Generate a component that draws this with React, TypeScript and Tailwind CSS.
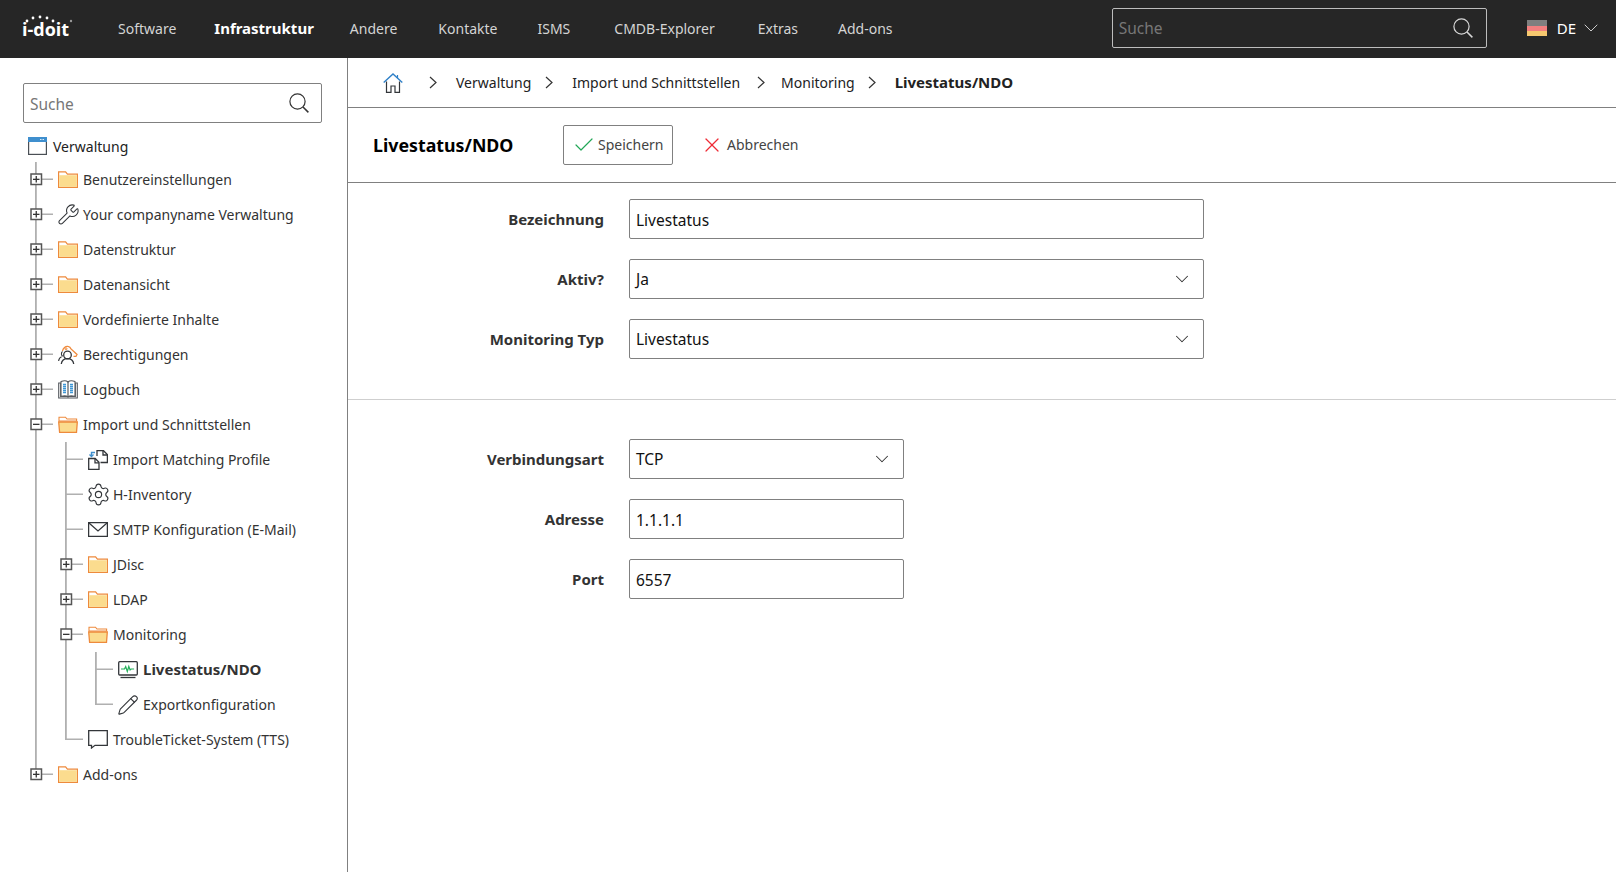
import { Check, ChevronDown, Pencil, Settings, Wrench, X } from "lucide-react";
import type { ReactNode } from "react";

const NAV = [
  { label: "Software", cls: "" },
  { label: "Infrastruktur", cls: "ml-[38px] text-[15px] font-bold text-white" },
  { label: "Andere", cls: "ml-[36px]" },
  { label: "Kontakte", cls: "ml-[41px]" },
  { label: "ISMS", cls: "ml-[40px]" },
  { label: "CMDB-Explorer", cls: "ml-[44px]" },
  { label: "Extras", cls: "ml-[43px]" },
  { label: "Add-ons", cls: "ml-[40px]" },
];

function SearchIcon({ color }: { color: string }) {
  return (
    <svg width="20" height="20" viewBox="0 0 20 20" fill="none" stroke={color} strokeWidth="1.2">
      <circle cx="8.5" cy="8.5" r="7.6" />
      <path d="M14 14l5.4 5.4" strokeWidth="1.5" />
    </svg>
  );
}

function Logo() {
  return (
    <svg width="52" height="30" viewBox="0 0 52 30" className="ml-[22px] shrink-0">
      {[[5, 7], [11, 4], [18, 3], [25, 4], [31, 7]].map(([x, y]) => (
        <circle key={x} cx={x} cy={y} r="1.4" fill="#fff" />
      ))}
      <circle cx="49" cy="7" r="1.2" fill="#999" />
      <text x="0" y="22" fill="#fff" fontSize="18" fontWeight="700" fontFamily="'Open Sans', sans-serif">
        i-doit
      </text>
    </svg>
  );
}

function Folder({ open }: { open?: boolean }) {
  if (open) {
    return (
      <svg width="20" height="17" viewBox="0 0 20 17">
        <path d="M1 4V1.2h6.5L9 3h9.6v2H1z" fill="#fff" stroke="#ee8a3c" strokeWidth="1.1" />
        <path d="M.7 6h18.6l-.8 10.3H1.6z" fill="#fbdc8e" stroke="#ee8a3c" strokeWidth="1.3" />
      </svg>
    );
  }
  return (
    <svg width="20" height="17" viewBox="0 0 20 17">
      <path d="M.6 16.4V.8h7l1.8 2.4h10v13.2z" fill="#fff" stroke="#ee8a3c" strokeWidth="1.2" />
      <path d="M1.2 4.2h17.6v11.6H1.2z" fill="#fbdc8e" />
    </svg>
  );
}

function WindowIcon() {
  return (
    <svg width="19" height="18" viewBox="0 0 19 18">
      <rect x=".6" y=".6" width="17.8" height="16.8" fill="#fff" stroke="#4a4f55" strokeWidth="1.2" />
      <rect x="0" y="0" width="19" height="5" fill="#3f8fce" />
      <path d="M12 2.5h1.5M14.5 2.5H16" stroke="#d8ecfa" strokeWidth="1" />
    </svg>
  );
}

function PermissionsIcon() {
  return (
    <svg width="20" height="20" viewBox="0 0 20 20" fill="none">
      <path d="M4.500 6c.5-3 3-5 5.500-4.600 1.500.2 2.600 1.300 3 2.600l6 5.500-1 1.800h-2.500" stroke="#ef8a3c" strokeWidth="1.300" />
      <circle cx="8" cy="3.800" r="1" stroke="#ef8a3c" />
      <circle cx="9.500" cy="10" r="3.800" fill="#fff" stroke="#33363a" strokeWidth="1.300" />
      <path d="M3.300 19c.5-3.800 2.800-5.300 6.200-5.300s5.700 1.500 6.200 5.300" stroke="#33363a" strokeWidth="1.300" />
      <path d="M.6 16c.3-2.200 1.300-3.600 3-4.200M4.500 6.500C3 7.500 3 10.500 4.800 11.200" stroke="#33363a" strokeWidth="1.100" />
    </svg>
  );
}

function BookIcon() {
  return (
    <svg width="20" height="19" viewBox="0 0 20 19" fill="none">
      <path d="M.7 3h2v13.500h14.600V3h2v15H.7z" fill="#fff" stroke="#55595e" strokeWidth="1.100" />
      <path d="M3 1.500c2.500-1 5.500-1 7 .5 1.500-1.500 4.500-1.500 7-.5v15c-2.500-1-5.500-1-7 .5-1.500-1.500-4.500-1.500-7-.5z" fill="#fff" stroke="#55595e" strokeWidth="1.100" />
      <path d="M10 2v15" stroke="#55595e" strokeWidth="1.200" />
      <path d="M5 4.500h3M5 6.500h3M5 8.500h3M5 10.500h3M5 12.500h3M12 4.500h3M12 6.500h3M12 8.500h3M12 10.500h3M12 12.500h3" stroke="#3f97d6" strokeWidth="1.300" />
    </svg>
  );
}

function ImportIcon() {
  return (
    <svg width="20" height="20" viewBox="0 0 20 20" fill="none" stroke="#33363a" strokeWidth="1.300">
      <path d="M9 6V.7h6.500L19.400 4.500v8H12.500" />
      <path d="M15 1v4h4.400" />
      <path d="M.7 8.500h6.500l3.800 3.800v7.100H.7z" fill="#fff" />
      <path d="M7 8.800v4h4" />
      <path d="M7 2.500H3.500v3" stroke="#3f8fce" strokeWidth="1.400" />
      <path d="M1.500 4.500l2 2 2-2" stroke="#3f8fce" strokeWidth="1.400" />
    </svg>
  );
}

function MailIcon() {
  return (
    <svg width="20" height="15" viewBox="0 0 20 15" fill="none" stroke="#33363a" strokeWidth="1.300">
      <rect x=".6" y=".6" width="18.800" height="13.800" />
      <path d="M1 1l9 8 9-8" />
    </svg>
  );
}

function MonitorIcon() {
  return (
    <svg width="20" height="18" viewBox="0 0 20 18" fill="none">
      <rect x=".7" y=".7" width="18.600" height="13.300" rx="1" stroke="#33363a" strokeWidth="1.300" />
      <path d="M3 8h3.500l1.200-2.500 1.600 5 1.500-5 1.300 3.500 1-1h3" stroke="#22b05a" strokeWidth="1.200" />
      <path d="M2.500 16.500h15" stroke="#33363a" strokeWidth="1.300" />
    </svg>
  );
}

function ChatIcon() {
  return (
    <svg width="20" height="19" viewBox="0 0 20 19" fill="none" stroke="#33363a" strokeWidth="1.300">
      <path d="M.7.7h18.600v14.600H7L3.500 18v-2.700H.7z" />
    </svg>
  );
}

function HomeIcon() {
  return (
    <svg width="20" height="20" viewBox="0 0 20 20" fill="none">
      <path d="M.7 9.500L10 1l9.300 8.500" stroke="#2f80c8" strokeWidth="1.400" />
      <path d="M3.500 8.500v10.800h4.500v-6.300h4v6.300h4.500V8.500" stroke="#33363a" strokeWidth="1.200" />
      <path d="M14.500 2v3" stroke="#2f80c8" strokeWidth="1.200" />
    </svg>
  );
}

function CrumbChevron({ className }: { className: string }) {
  return (
    <svg width="8" height="13" viewBox="0 0 8 13" fill="none" stroke="#333" strokeWidth="1.200" className={className}>
      <path d="M1 1l6 5.500-6 5.500" />
    </svg>
  );
}

type Row = {
  label: string;
  depth: number;
  icon: ReactNode;
  expander?: "plus" | "minus";
  last?: boolean;
  bold?: boolean;
};

const ROWS: Row[] = [
  { label: "Benutzereinstellungen", depth: 0, icon: <Folder />, expander: "plus" },
  { label: "Your companyname Verwaltung", depth: 0, icon: <Wrench size={23} strokeWidth={1.1} color="#33363a" className="shrink-0" />, expander: "plus" },
  { label: "Datenstruktur", depth: 0, icon: <Folder />, expander: "plus" },
  { label: "Datenansicht", depth: 0, icon: <Folder />, expander: "plus" },
  { label: "Vordefinierte Inhalte", depth: 0, icon: <Folder />, expander: "plus" },
  { label: "Berechtigungen", depth: 0, icon: <PermissionsIcon />, expander: "plus" },
  { label: "Logbuch", depth: 0, icon: <BookIcon />, expander: "plus" },
  { label: "Import und Schnittstellen", depth: 0, icon: <Folder open />, expander: "minus" },
  { label: "Import Matching Profile", depth: 1, icon: <ImportIcon /> },
  { label: "H-Inventory", depth: 1, icon: <Settings size={25} strokeWidth={1.1} color="#33363a" className="shrink-0" /> },
  { label: "SMTP Konfiguration (E-Mail)", depth: 1, icon: <MailIcon /> },
  { label: "JDisc", depth: 1, icon: <Folder />, expander: "plus" },
  { label: "LDAP", depth: 1, icon: <Folder />, expander: "plus" },
  { label: "Monitoring", depth: 1, icon: <Folder open />, expander: "minus" },
  { label: "Livestatus/NDO", depth: 2, icon: <MonitorIcon />, bold: true },
  { label: "Exportkonfiguration", depth: 2, icon: <Pencil size={22} strokeWidth={1.2} color="#33363a" className="shrink-0" />, last: true },
  { label: "TroubleTicket-System (TTS)", depth: 1, icon: <ChatIcon />, last: true },
  { label: "Add-ons", depth: 0, icon: <Folder />, expander: "plus", last: true },
];

// connector lines and +/- box in front of a tree row
function Guide({ row }: { row: Row }) {
  const x = 36 + row.depth * 30;
  const parents = Array.from({ length: row.depth }, (_, i) => 36 + i * 30);
  return (
    <svg width={x + 22} height="35" className="shrink-0">
      {parents.map((p) => (
        <rect key={p} x={p - 1} y="0" width="1.800" height="35" fill="#b0b0b0" />
      ))}
      <rect x={x - 1} y="0" width="1.800" height={row.last ? 18 : 35} fill="#b0b0b0" />
      <rect x={x - 1} y="16.500" width="18" height="1.500" fill="#b0b0b0" />
      {row.expander && (
        <g>
          <rect x={x - 5} y="12" width="10.500" height="10.500" fill="#fff" stroke="#555" strokeWidth="1.500" />
          <rect x={x - 3} y="16.700" width="6.500" height="1.300" fill="#333" />
          {row.expander === "plus" && <rect x={x - 0.4} y="14" width="1.300" height="6.500" fill="#333" />}
        </g>
      )}
    </svg>
  );
}

function TreeRow({ row }: { row: Row }) {
  return (
    <div className="flex h-[35px] items-center">
      <Guide row={row} />
      <span className="flex w-5 shrink-0 justify-center">{row.icon}</span>
      <span className={`ml-[5px] whitespace-nowrap text-[#333] ${row.bold ? "text-[15px] font-bold" : ""}`}>{row.label}</span>
    </div>
  );
}

function Sidebar() {
  return (
    <aside className="w-[348px] shrink-0 border-r border-[#808080] pt-[25px]">
      <div className="ml-[23px] flex h-10 w-[299px] items-center justify-between rounded-[2px] border border-[#808080] pl-[6px] pr-[12px]">
        <input placeholder="Suche" className="w-40 pt-[3px] text-[15.5px] outline-none placeholder:text-[#777]" />
        <SearchIcon color="#333" />
      </div>
      <div className="mt-[7px] flex h-8 items-center pl-[28px]">
        <WindowIcon />
        <span className="ml-[6px] text-[#222]">Verwaltung</span>
      </div>
      <div>
        {ROWS.map((row) => (
          <TreeRow key={row.label} row={row} />
        ))}
      </div>
    </aside>
  );
}

function Field({ label, children }: { label: string; children: ReactNode }) {
  return (
    <div className="grid grid-cols-[256px_1fr] items-center gap-x-[25px]">
      <label className="text-right text-[15px] font-bold text-[#333]">{label}</label>
      {children}
    </div>
  );
}

function TextInput({ value, wide }: { value: string; wide?: boolean }) {
  return (
    <input
      readOnly
      value={value}
      className={`h-10 rounded-[2px] border border-[#808080] px-[6px] pt-px text-[15.5px] text-[#111] outline-none ${wide ? "w-[575px]" : "w-[275px]"}`}
    />
  );
}

function SelectInput({ value, wide }: { value: string; wide?: boolean }) {
  return (
    <div
      className={`flex h-10 items-center justify-between rounded-[2px] border border-[#808080] pl-[6px] pr-[10px] text-[15.5px] text-[#111] ${wide ? "w-[575px]" : "w-[275px]"}`}
    >
      <span className="pt-[2px]">{value}</span>
      <ChevronDown size={22} strokeWidth={1.1} color="#333" />
    </div>
  );
}

export default function App() {
  return (
    <div className="flex h-screen flex-col overflow-hidden bg-white font-['Noto_Sans',sans-serif] text-[14px]">
      <header className="flex h-[58px] shrink-0 items-center bg-[#262626]">
        <Logo />
        <nav className="mb-[2px] ml-[44px] flex items-center text-[14px] text-[#d4d4d4]">
          {NAV.map((item) => (
            <span key={item.label} className={item.cls}>
              {item.label}
            </span>
          ))}
        </nav>
        <div className="mb-[2px] ml-auto flex h-10 w-[375px] items-center justify-between rounded-[2px] border border-[#bdbdbd] pl-[6px] pr-[13px]">
          <input placeholder="Suche" className="w-40 bg-transparent pt-[2px] text-[15.5px] outline-none placeholder:text-[#777]" />
          <SearchIcon color="#d8d8d8" />
        </div>
        <div className="mb-[2px] ml-10 mr-[13px] flex items-center text-[15px] text-white">
          <div className="flex h-4 w-5 flex-col">
            <span className="h-[6px] bg-[#7f7f7f]" />
            <span className="h-[5px] bg-[#f27f7f]" />
            <span className="h-[5px] bg-[#f6c86f]" />
          </div>
          <span className="ml-[10px]">DE</span>
          <ChevronDown size={24} strokeWidth={1} color="#ccc" className="ml-[3px]" />
        </div>
      </header>

      <div className="flex min-h-0 flex-1">
        <Sidebar />
        <main className="min-w-0 flex-1">
          <div className="flex h-[50px] items-center border-b border-[#808080] pl-[35px] text-[#222]">
            <HomeIcon />
            <CrumbChevron className="ml-[26px]" />
            <span className="ml-[19px]">Verwaltung</span>
            <CrumbChevron className="ml-[14px]" />
            <span className="ml-[19px]">Import und Schnittstellen</span>
            <CrumbChevron className="ml-[17px]" />
            <span className="ml-[16px]">Monitoring</span>
            <CrumbChevron className="ml-[13px]" />
            <span className="ml-[19px] text-[15px] font-bold">Livestatus/NDO</span>
          </div>

          <div className="flex h-[75px] items-center border-b border-[#808080] pl-[25px]">
            <h1 className="mt-px w-[190px] text-[17.8px] font-bold text-black">Livestatus/NDO</h1>
            <button className="flex h-10 w-[110px] items-center rounded-[2px] border border-[#808080] pl-[8px] text-[#444]">
              <Check size={24} strokeWidth={1.2} color="#22a757" />
              <span className="mb-px ml-[2px]">Speichern</span>
            </button>
            <button className="ml-[27px] flex items-center text-[#444]">
              <X size={24} strokeWidth={1.2} color="#ee2b36" />
              <span className="mb-px ml-[3px]">Abbrechen</span>
            </button>
          </div>

          <div className="flex flex-col gap-5 border-b border-[#cfcfcf] pb-10 pt-4">
            <Field label="Bezeichnung">
              <TextInput value="Livestatus" wide />
            </Field>
            <Field label="Aktiv?">
              <SelectInput value="Ja" wide />
            </Field>
            <Field label="Monitoring Typ">
              <SelectInput value="Livestatus" wide />
            </Field>
          </div>

          <div className="flex flex-col gap-5 pt-[39px]">
            <Field label="Verbindungsart">
              <SelectInput value="TCP" />
            </Field>
            <Field label="Adresse">
              <TextInput value="1.1.1.1" />
            </Field>
            <Field label="Port">
              <TextInput value="6557" />
            </Field>
          </div>
        </main>
      </div>
    </div>
  );
}
